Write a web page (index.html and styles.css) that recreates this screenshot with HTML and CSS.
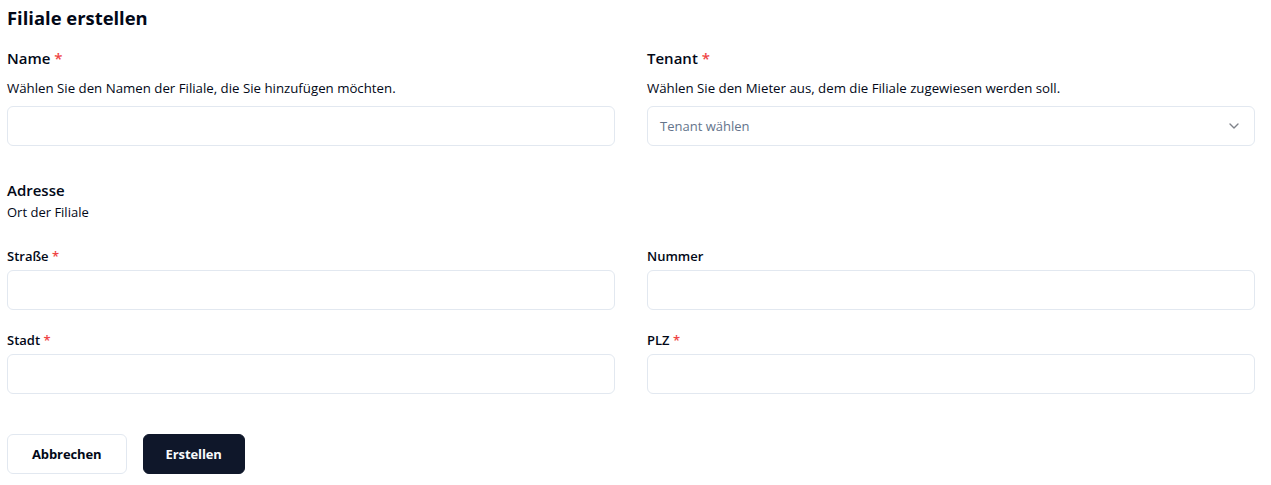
FILE: index.html
```html
<!DOCTYPE html>
<html lang="de">
<head>
<meta charset="utf-8">
<title>Filiale erstellen</title>
<link rel="stylesheet" href="styles.css">
</head>
<body>
<main class="page">
  <h1 class="title">Filiale erstellen</h1>

  <div class="grid top">
    <div class="field">
      <label class="label-lg">Name <span class="req">*</span></label>
      <p class="desc">Wählen Sie den Namen der Filiale, die Sie hinzufügen möchten.</p>
      <input class="input" type="text">
    </div>
    <div class="field">
      <label class="label-lg">Tenant <span class="req">*</span></label>
      <p class="desc">Wählen Sie den Mieter aus, dem die Filiale zugewiesen werden soll.</p>
      <button class="input select" type="button">
        <span class="placeholder">Tenant wählen</span>
        <svg class="chev" width="16" height="16" viewBox="0 0 24 24" fill="none" stroke="currentColor" stroke-width="2" stroke-linecap="round" stroke-linejoin="round"><path d="m6 9 6 6 6-6"/></svg>
      </button>
    </div>
  </div>

  <section class="address">
    <h2 class="section-title">Adresse</h2>
    <p class="section-desc">Ort der Filiale</p>
  </section>

  <div class="grid rows">
    <div class="field small">
      <label class="label">Straße <span class="req">*</span></label>
      <input class="input" type="text">
    </div>
    <div class="field small">
      <label class="label">Nummer</label>
      <input class="input" type="text">
    </div>
    <div class="field small">
      <label class="label">Stadt <span class="req">*</span></label>
      <input class="input" type="text">
    </div>
    <div class="field small">
      <label class="label">PLZ <span class="req">*</span></label>
      <input class="input" type="text">
    </div>
  </div>

  <div class="actions">
    <button class="btn btn-outline" type="button">Abbrechen</button>
    <button class="btn btn-primary" type="button">Erstellen</button>
  </div>
</main>
</body>
</html>
```

FILE: styles.css
```css
* { box-sizing: border-box; }

html, body {
  margin: 0;
  padding: 0;
  background: #ffffff;
}

body {
  font-family: "Open Sans", "Noto Sans", Arial, sans-serif;
  color: #020817;
}

.page {
  width: 1262px;
  padding: 4px 0 0 7px;
}

.title {
  margin: 0;
  font-size: 18.4px;
  line-height: 28px;
  font-weight: 700;
}

.grid {
  display: grid;
  grid-template-columns: 608px 608px;
  column-gap: 32px;
}

.top {
  margin-top: 14px;
}

.field {
  display: flex;
  flex-direction: column;
}

.label-lg {
  font-size: 15px;
  line-height: 24px;
  font-weight: 600;
}

.label {
  font-size: 13px;
  line-height: 14px;
  font-weight: 600;
}

.req {
  color: #ef4444;
}

.desc {
  margin: 8px 0 8px;
  font-size: 13.25px;
  line-height: 20px;
}

.input {
  height: 40px;
  width: 100%;
  border: 1px solid #e2e8f0;
  border-radius: 6px;
  background: #ffffff;
  padding: 0 12px;
  font-family: inherit;
  font-size: 13px;
  color: #020817;
}

.select {
  display: flex;
  align-items: center;
  justify-content: space-between;
  text-align: left;
}

.placeholder {
  color: #64748b;
}

.chev {
  color: #020817;
  opacity: 0.5;
}

.address {
  margin-top: 32px;
}

.section-title {
  margin: 0;
  font-size: 15px;
  line-height: 24px;
  font-weight: 600;
}

.section-desc {
  margin: 0;
  font-size: 13px;
  line-height: 20px;
}

.rows {
  margin-top: 27px;
  row-gap: 23px;
}

.small {
  gap: 7px;
}

.actions {
  display: flex;
  gap: 16px;
  margin-top: 40px;
}

.btn {
  height: 40px;
  padding: 0 24px;
  border-radius: 6px;
  font-family: inherit;
  font-size: 13px;
  font-weight: 700;
  letter-spacing: -0.1px;
  cursor: pointer;
}

.btn-outline {
  background: #ffffff;
  border: 1px solid #e2e8f0;
  color: #020817;
}

.btn-primary {
  padding: 0 22px;
  background: #0f172a;
  border: 1px solid #0f172a;
  color: #f8fafc;
}
```
